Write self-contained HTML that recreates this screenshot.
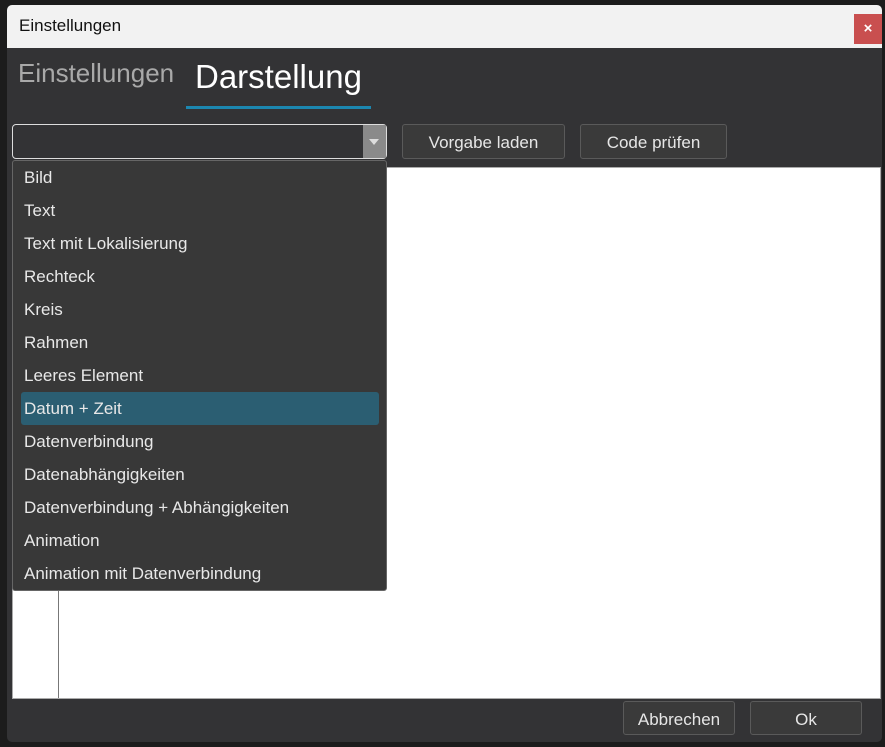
<!DOCTYPE html>
<html><head><style>
body{margin:0;width:885px;height:747px;background:#1c1c1c;font-family:"Liberation Sans",sans-serif;position:relative;overflow:hidden}
.a{position:absolute;box-sizing:border-box}
.btn{background:#3a3a3a;border:1px solid #5a5a5a;border-radius:3px;color:#e6e6e6;font-size:17px;text-align:center}
.it{position:absolute;left:24px;color:#e8e8e8;font-size:17px}
</style></head><body>
<div class="a" style="left:7px;top:5px;width:875px;height:737px;background:#333335;border-radius:5px;overflow:hidden">
 <div class="a" style="left:0;top:0;width:875px;height:43px;background:#f2f2f2"></div>
</div>
<div class="a" style="left:19px;top:16px;font-size:17px;color:#111">Einstellungen</div>
<div class="a" style="left:854px;top:14px;width:28px;height:30px;background:#c94f4f;color:#fff;font-size:15px;font-weight:bold;text-align:center;line-height:30px">×</div>
<div class="a" style="left:18px;top:58px;font-size:26px;color:#a9a9a9">Einstellungen</div>
<div class="a" style="left:195px;top:58px;font-size:33px;color:#fff">Darstellung</div>
<div class="a" style="left:186px;top:106px;width:185px;height:3px;background:#1c87b0"></div>
<div class="a" style="left:12px;top:124px;width:375px;height:35px;border:1px solid #ddd;border-radius:4px;background:#333335"></div>
<div class="a" style="left:363px;top:125px;width:23px;height:33px;background:#8a8a8a"></div>
<div class="a" style="left:369px;top:139px;width:0;height:0;border-left:5px solid transparent;border-right:5px solid transparent;border-top:6px solid #ddd"></div>
<div class="a btn" style="left:402px;top:124px;width:163px;height:35px;line-height:36px">Vorgabe laden</div>
<div class="a btn" style="left:580px;top:124px;width:147px;height:35px;line-height:36px">Code prüfen</div>
<div class="a" style="left:12px;top:167px;width:869px;height:532px;background:#fff;border:1px solid #aaa"></div>
<div class="a" style="left:58px;top:588px;width:1px;height:110px;background:#777"></div>
<div class="a" style="left:12px;top:160px;width:375px;height:431px;background:#383838;border:1px solid #666;border-radius:3px">
 <div class="a" style="left:8px;top:231px;width:358px;height:33px;background:#2b5e72;border-radius:3px"></div>
</div>
<div class="it" style="top:168px">Bild</div>
<div class="it" style="top:201px">Text</div>
<div class="it" style="top:234px">Text mit Lokalisierung</div>
<div class="it" style="top:267px">Rechteck</div>
<div class="it" style="top:300px">Kreis</div>
<div class="it" style="top:333px">Rahmen</div>
<div class="it" style="top:366px">Leeres Element</div>
<div class="it" style="top:399px">Datum + Zeit</div>
<div class="it" style="top:432px">Datenverbindung</div>
<div class="it" style="top:465px">Datenabhängigkeiten</div>
<div class="it" style="top:498px">Datenverbindung + Abhängigkeiten</div>
<div class="it" style="top:531px">Animation</div>
<div class="it" style="top:564px">Animation mit Datenverbindung</div>
<div class="a btn" style="left:623px;top:701px;width:112px;height:34px;line-height:35px">Abbrechen</div>
<div class="a btn" style="left:750px;top:701px;width:112px;height:34px;line-height:35px">Ok</div>
</body></html>
